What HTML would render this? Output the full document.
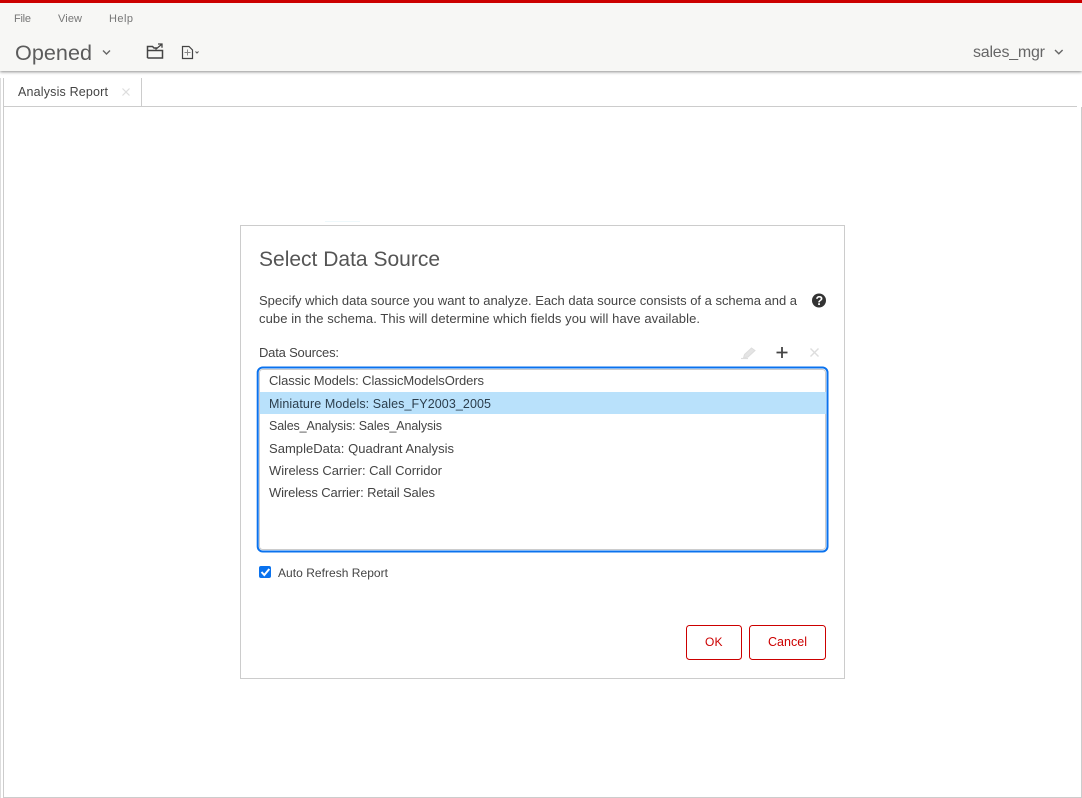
<!DOCTYPE html>
<html><head><meta charset="utf-8"><title>Select Data Source</title>
<style>
html,body{margin:0;padding:0;background:#fff;width:1082px;height:798px;overflow:hidden}
svg{display:block;position:absolute;left:0;top:0}
text{font-family:"Liberation Sans",sans-serif;fill:#444;font-size:13px}
.hd{position:absolute;left:0;top:3px;width:1082px;height:68px;background:#f7f7f5;box-shadow:0 1px 3px rgba(0,0,0,.45)}
</style></head><body>
<div class="hd"></div>
<svg width="1082" height="798" viewBox="0 0 1082 798">
<rect x="0" y="0" width="1082" height="3" fill="#cc0000"/>
<text x="14" y="22" style="font-size:11px;fill:#777" textLength="17">File</text>
<text x="58" y="22" style="font-size:11px;fill:#777" textLength="24">View</text>
<text x="109" y="22" style="font-size:11px;fill:#777" textLength="24">Help</text>
<text x="15" y="60" style="font-size:21.600px;fill:#5c5c5c" textLength="77">Opened</text>
<path d="M103 50.500l3.500 3.500 3.500-3.500" fill="none" stroke="#666" stroke-width="1.400"/>
<path d="M147.500 58V46.500h5l1.500 1.500h3M147.500 50.500h15V58h-15" fill="none" stroke="#444" stroke-width="1.500"/>
<path d="M155.500 49.500l6-5M158 44h4v3.800" fill="none" stroke="#444" stroke-width="1.300"/>
<path d="M182.500 46.500h6.500l3.500 3.500v8.500h-10z" fill="none" stroke="#444" stroke-width="1.200"/>
<path d="M187.500 49.500v6M184.500 52.500h6" stroke="#888" stroke-width="1"/>
<path d="M195.500 51.500l1.500 1.500 1.500-1.500" fill="none" stroke="#555" stroke-width="1"/>
<text x="973" y="57" style="font-size:16px;fill:#666" textLength="72">sales_mgr</text>
<path d="M1055 50l3.800 3.800 3.800-3.800" fill="none" stroke="#666" stroke-width="1.400"/>

<!-- workspace frame -->
<rect x="0" y="78" width="1" height="720" fill="#ddd"/>
<rect x="3" y="78" width="1" height="720" fill="#ccc"/>
<rect x="3" y="106" width="1074" height="1" fill="#ccc"/>
<rect x="141" y="78" width="1" height="28" fill="#ccc"/>
<rect x="1081" y="107" width="1" height="691" fill="#ccc"/>
<rect x="3" y="797" width="1079" height="1" fill="#ccc"/>
<text x="18" y="96" style="font-size:12.500px;fill:#444" textLength="90">Analysis Report</text>
<path d="M122.500 88.500l7 7M129.500 88.500l-7 7" stroke="#ddd" stroke-width="1.200"/>

<!-- dialog -->
<rect x="325" y="221" width="35" height="1" fill="#eef8fb"/>
<rect x="240.500" y="225.500" width="604" height="453" fill="#fff" stroke="#ccc"/>
<text x="259" y="266" style="font-size:21px;fill:#555" textLength="181">Select Data Source</text>
<text x="259" y="305" textLength="538">Specify which data source you want to analyze. Each data source consists of a schema and a</text>
<text x="259" y="323" textLength="441">cube in the schema. This will determine which fields you will have available.</text>
<circle cx="819" cy="300.500" r="7" fill="#333"/>
<text x="815.500" y="305" style="font-size:12.500px;font-weight:bold;fill:#fff">?</text>
<text x="259" y="357" textLength="80">Data Sources:</text>
<path d="M744.500 354.500l7-6.500 3.500 2.500-7 6.500-4.500 1z" fill="#e4e4e4" stroke="#ddd" stroke-width="1"/>
<path d="M741 358.500h7" stroke="#ddd" stroke-width="1.200"/>
<path d="M782 347v11M776.500 352.500h11" stroke="#444" stroke-width="1.800"/>
<path d="M810.500 348.500l8 8M818.500 348.500l-8 8" stroke="#ddd" stroke-width="1.400"/>

<!-- listbox -->
<rect x="257.700" y="367.500" width="569.800" height="184" rx="5" fill="#fff" stroke="#0a72ee" stroke-width="2"/>
<rect x="259.500" y="369.500" width="566" height="180" rx="3" fill="#fff" stroke="#ccc"/>
<rect x="260" y="392" width="566" height="22" fill="#b9e1fb"/>
<text x="269" y="385" textLength="215">Classic Models: ClassicModelsOrders</text>
<text x="269" y="408" style="font-size:12.500px;fill:#2c3e4c" textLength="222">Miniature Models: Sales_FY2003_2005</text>
<text x="269" y="430" style="font-size:12.500px" textLength="173">Sales_Analysis: Sales_Analysis</text>
<text x="269" y="453" textLength="185">SampleData: Quadrant Analysis</text>
<text x="269" y="475" textLength="173">Wireless Carrier: Call Corridor</text>
<text x="269" y="497" textLength="166">Wireless Carrier: Retail Sales</text>

<!-- checkbox -->
<rect x="259" y="566" width="12" height="12" rx="2" fill="#0a72ee"/>
<path d="M261.500 572l2.800 3 5-6" fill="none" stroke="#fff" stroke-width="2"/>
<text x="278" y="577" style="font-size:12px" textLength="110">Auto Refresh Report</text>

<!-- buttons -->
<rect x="686.500" y="625.500" width="55" height="34" rx="3" fill="#fff" stroke="#cc0000"/>
<rect x="749.500" y="625.500" width="76" height="34" rx="3" fill="#fff" stroke="#cc0000"/>
<text x="705" y="646" style="font-size:12px;fill:#cc0000" textLength="17.500">OK</text>
<text x="768" y="646" style="font-size:12.500px;fill:#cc0000" textLength="39">Cancel</text>
</svg>
</body></html>
